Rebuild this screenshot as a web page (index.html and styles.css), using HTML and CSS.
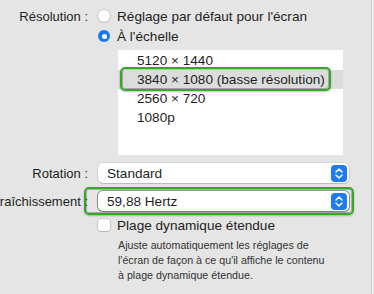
FILE: index.html
```html
<!DOCTYPE html>
<html lang="fr">
<head>
<meta charset="UTF-8">
<title>Moniteurs</title>
<link rel="stylesheet" href="styles.css">
</head>
<body>

<div class="pane">
    <div class="row row-first">
        <div class="label">Résolution :</div>
        <div class="ctl">
            <label class="option"><span class="radio"></span>Réglage par défaut pour l'écran</label>
        </div>
    </div>
    <div class="row">
        <div class="label"></div>
        <div class="ctl">
            <label class="option"><span class="radio on"></span>À l'échelle</label>
        </div>
    </div>
    <div class="row">
        <div class="label"></div>
        <div class="ctl">
            <ul class="list">
                <li>5120 × 1440</li>
                <li class="sel">3840 × 1080 (basse résolution)<span class="mark mark-row"></span></li>
                <li>2560 × 720</li>
                <li>1080p</li>
            </ul>
        </div>
    </div>
    <div class="row row-select">
        <div class="label">Rotation :</div>
        <div class="ctl">
            <div class="popup">Standard<span class="stepper"><svg width="16" height="17" viewBox="0 0 16 17"><rect width="16" height="17" rx="4" fill="#1d7cf2"/><path d="M5 7l3-3 3 3M5 10l3 3 3-3" fill="none" stroke="#fff" stroke-width="1.5" stroke-linecap="round" stroke-linejoin="round"/></svg></span></div>
        </div>
    </div>
    <div class="row row-select">
        <div class="label">Taux de rafraîchissement :</div>
        <div class="ctl">
            <div class="popup focus">59,88 Hertz<span class="stepper"><svg width="16" height="17" viewBox="0 0 16 17"><rect width="16" height="17" rx="4" fill="#1d7cf2"/><path d="M5 7l3-3 3 3M5 10l3 3 3-3" fill="none" stroke="#fff" stroke-width="1.5" stroke-linecap="round" stroke-linejoin="round"/></svg></span><span class="mark mark-select"></span></div>
        </div>
    </div>
    <div class="row row-check">
        <div class="label"></div>
        <div class="ctl">
            <label class="option"><span class="check"></span>Plage dynamique étendue</label>
            <p class="note">Ajuste automatiquement les réglages de<br>l'écran de façon à ce qu'il affiche le contenu<br>à plage dynamique étendue.</p>
        </div>
    </div>
</div>

</body>
</html>
```

FILE: styles.css
```css
body {
    margin: 0;
    background-color: #ececec;
    font-family: "Liberation Sans", Arial, sans-serif;
    font-size: 13.6px;
    color: #1f1f1f;
}

.pane {
    width: 372px;
    height: 294px;
    box-sizing: border-box;
    padding-top: 6px;
    background-color: #e5e5e5;
    border-right: 1px solid #d2d2d2;
    overflow: hidden;
}

.row {
    display: grid;
    grid-template-columns: 88px 1fr;
    column-gap: 10px;
}

.label {
    display: flex;
    justify-content: flex-end;
    align-items: center;
    white-space: nowrap;
    height: 20px;
    font-size: 13px;
}

.ctl {
    min-width: 0;
}

.option {
    display: flex;
    align-items: center;
    gap: 7px;
    height: 20px;
}

.radio {
    width: 12px;
    height: 12px;
    border-radius: 50%;
    background-color: #fff;
    box-shadow: 0 0 0 0.5px rgba(0, 0, 0, 0.2), 0 1px 1px rgba(0, 0, 0, 0.12);
    flex: none;
}

.radio.on {
    background-color: #1a79f0;
    box-shadow: none;
    position: relative;
}

.radio.on::after {
    content: "";
    position: absolute;
    left: 3.5px;
    top: 3.5px;
    width: 5px;
    height: 5px;
    border-radius: 50%;
    background-color: #fff;
}

.list {
    list-style: none;
    margin: 4px 0 0 20px;
    padding: 1px 0 0;
    width: 225px;
    height: 105px;
    box-sizing: border-box;
    background-color: #fff;
}

.list li {
    height: 19px;
    line-height: 19px;
    padding-left: 19px;
    white-space: nowrap;
}

.list li.sel {
    position: relative;
    background-color: #dcdcdc;
}

.row-select {
    margin-top: 8px;
}

.popup {
    position: relative;
    display: flex;
    align-items: center;
    height: 20px;
    width: 251px;
    box-sizing: border-box;
    padding-left: 9px;
    background-color: #fff;
    border-radius: 5px;
    box-shadow: 0 0 0 0.5px rgba(0, 0, 0, 0.15), 0 1px 1px rgba(0, 0, 0, 0.12);
}

.popup.focus {
    box-shadow: 0 0 0 1px rgba(0, 0, 0, 0.35), 0 1px 2px rgba(0, 0, 0, 0.2);
}

.stepper {
    margin-left: auto;
    margin-right: 2px;
    display: flex;
}

/* green annotation frames drawn over the screenshot */
.mark {
    position: absolute;
    border: 2px solid #36a72a;
    border-radius: 5px;
    box-shadow: inset 0 0 0 1px rgba(0, 0, 0, 0.25), 0 1px 2px rgba(0, 0, 0, 0.25);
    pointer-events: none;
}

.mark-row {
    left: 2px;
    right: 12px;
    top: -3px;
    bottom: -2px;
}

.mark-select {
    left: -14px;
    right: -5px;
    top: -4px;
    bottom: -4px;
}

.row-check {
    margin-top: 4px;
}

.check {
    width: 12px;
    height: 12px;
    border-radius: 3px;
    background-color: #fff;
    box-shadow: 0 0 0 0.5px rgba(0, 0, 0, 0.2), 0 1px 1px rgba(0, 0, 0, 0.12);
    flex: none;
}

.note {
    margin: 3px 0 0 20px;
    font-size: 10.7px;
    line-height: 15px;
    color: #333;
}
```
